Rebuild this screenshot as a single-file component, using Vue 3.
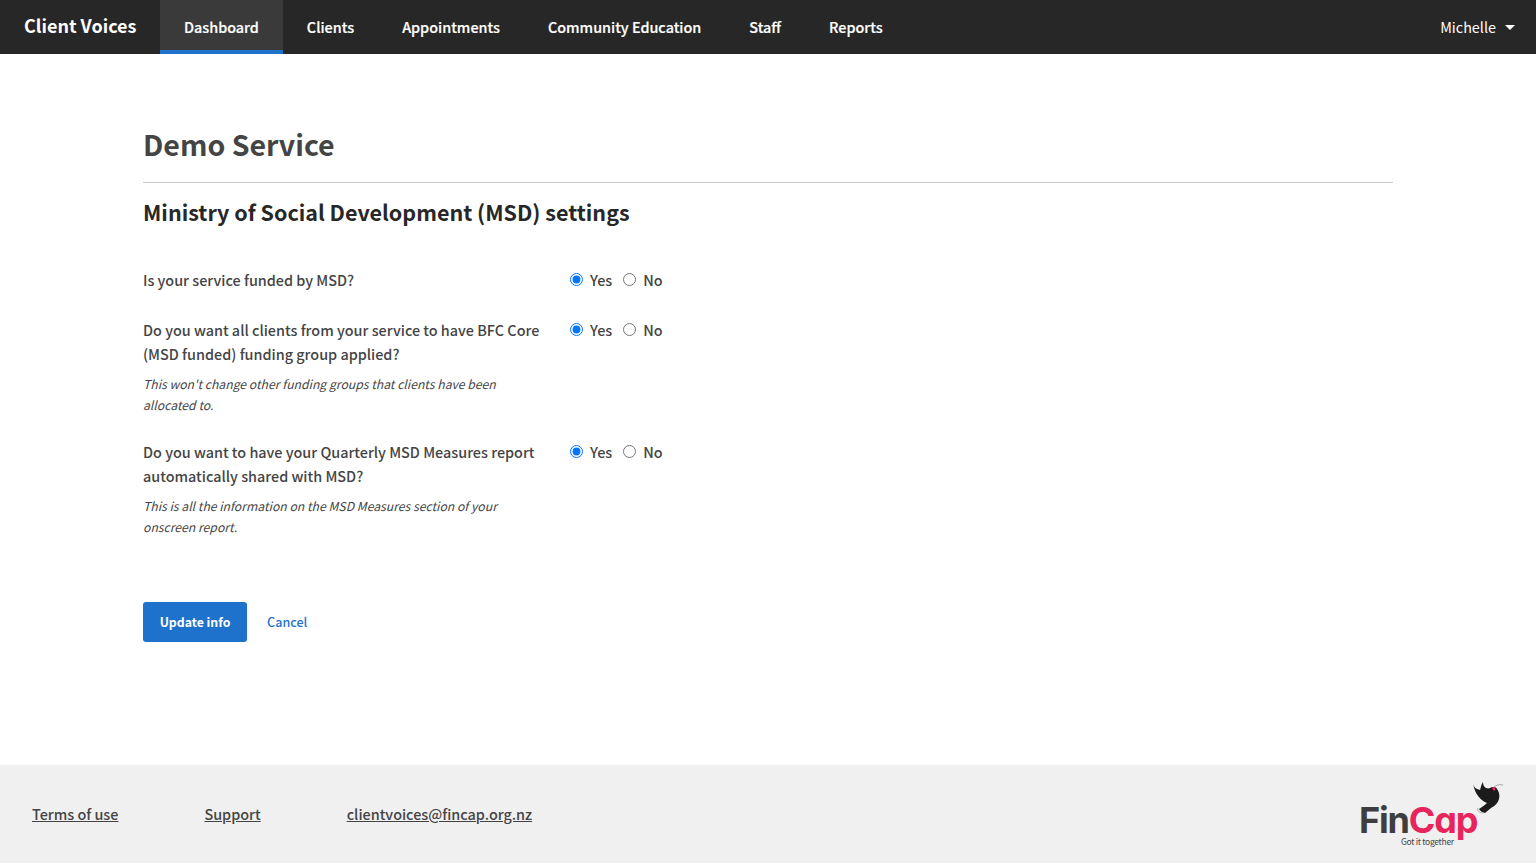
<script setup>
const links = ['Dashboard', 'Clients', 'Appointments', 'Community Education', 'Staff', 'Reports']
const questions = [
  { id: 'funded', text: 'Is your service funded by MSD?' },
  { id: 'core', text: 'Do you want all clients from your service to have BFC Core (MSD funded) funding group applied?', hint: "This won't change other funding groups that clients have been allocated to." },
  { id: 'report', text: 'Do you want to have your Quarterly MSD Measures report automatically shared with MSD?', hint: 'This is all the information on the MSD Measures section of your onscreen report.' }
]
</script>

<template>
  <div class="page">
    <nav class="nav">
      <a class="brand">Client Voices</a>
      <a v-for="(l, i) in links" :key="l" class="link" :class="{ active: i === 0 }">{{ l }}</a>
      <a class="user">Michelle<span class="caret"></span></a>
    </nav>
    <main class="main">
      <h1 class="title">Demo Service</h1>
      <h2 class="sub">Ministry of Social Development (MSD) settings</h2>
      <form class="form" @submit.prevent>
        <div v-for="q in questions" :key="q.id" class="row">
          <div class="question">
            <div class="qtext">{{ q.text }}</div>
            <p v-if="q.hint" class="hint">{{ q.hint }}</p>
          </div>
          <div class="choices">
            <label class="choice"><input type="radio" :name="q.id" checked><span>Yes</span></label>
            <label class="choice"><input type="radio" :name="q.id"><span>No</span></label>
          </div>
        </div>
        <div class="actions">
          <button class="btn" type="submit">Update info</button>
          <a class="cancel">Cancel</a>
        </div>
      </form>
    </main>
    <footer class="footer">
      <a class="flink">Terms of use</a>
      <a class="flink">Support</a>
      <a class="flink">clientvoices@fincap.org.nz</a>
      <div class="logo">
        <svg class="bird" viewBox="0 0 36 40" width="36" height="40">
          <path d="M4 3 C5 7 8 8 11 9 C12 6 12 4 14 1 C14 4 15 6 17 7 C20 8 21 7 23 6 L27 6.5 C30 10 31 14 30 18 C29 22 26 25 22 27 L16 32 C13 31 11 30 10 28 C13 26 16 24 18 22 C12 20 6 13 4 3 Z" fill="#1b1b1b"/>
          <path d="M23 6.5 L26 6 L26 9.5 L24 9.5 Z" fill="#e8245c"/>
          <path d="M25 6 C27 4 31 3 34 4" fill="none" stroke="#777" stroke-width=".6"/>
          <path d="M9 27 C8 29 10 32 14 32" fill="none" stroke="#777" stroke-width=".6"/>
        </svg>
        <div class="word"><span class="fin">Fin</span><span class="cap">Cap</span></div>
        <div class="tag">Got it together</div>
      </div>
    </footer>
  </div>
</template>

<style>
html, body { margin: 0; padding: 0; }
</style>

<style scoped>
.page {
  min-height: 863px;
  display: flex;
  flex-direction: column;
  font-family: "Noto Sans CJK SC", "Noto Sans", sans-serif;
  color: #444;
  background: #fff;
}
.nav {
  height: 54px;
  background: #272727;
  display: flex;
  align-items: stretch;
  color: #fff;
}
.brand {
  width: 160px;
  box-sizing: border-box;
  padding-left: 24px;
  font-size: 18px;
  font-weight: 700;
  line-height: 51px;
}
.link {
  padding: 0 24px;
  font-size: 14.38px;
  font-weight: 500;
  -webkit-text-stroke: .2px #fff;
  line-height: 54px;
  box-sizing: border-box;
}
.link.active {
  background: #3a3a3a;
  border-bottom: 4px solid #1f72cc;
}
.user {
  margin-left: auto;
  padding-right: 21px;
  font-size: 14.4px;
  line-height: 56px;
  display: flex;
  align-items: center;
}
.caret {
  margin-left: 9px;
  border-top: 5px solid #fff;
  border-left: 5px solid transparent;
  border-right: 5px solid transparent;
}
.main {
  flex: 1;
  padding: 0 143px;
}
.title {
  margin: 0;
  padding: 70px 0 18px;
  height: 40px;
  font-size: 28.5px;
  line-height: 40px;
  font-weight: 700;
  color: #444;
  border-bottom: 1px solid #c8c8c8;
}
.sub {
  margin: 13px 0 0;
  font-size: 21.5px;
  line-height: 32px;
  font-weight: 700;
  color: #272727;
}
.form { margin-top: 40px; }
.row {
  display: flex;
  margin-bottom: 24px;
}
.question { width: 427px; padding-right: 27px; box-sizing: border-box; }
.qtext {
  font-size: 14.4px;
  line-height: 24px;
  font-weight: 500;
  padding-bottom: 2px;
}
.hint {
  margin: 6px 0 0;
  font-size: 12.2px;
  line-height: 21px;
  font-style: italic;
  width: 370px;
}
.choices { display: flex; gap: 11px; height: 24px; }
.choice {
  display: flex;
  align-items: center;
  font-size: 14.4px;
  font-weight: 500;
  line-height: 24px;
}
.choice input {
  margin: 0 7px 0 0;
  width: 13px;
  height: 13px;
  position: relative;
  top: -1px;
}
.actions {
  display: flex;
  align-items: center;
  gap: 20px;
  margin-top: 64px;
}
.btn {
  width: 104px;
  height: 40px;
  border: 0;
  border-radius: 3px;
  background: #1f72cc;
  color: #fff;
  font: 700 12.3px "Noto Sans CJK SC", sans-serif;
}
.cancel {
  color: #1f72cc;
  font-size: 12.6px;
  font-weight: 500;
  padding-bottom: 2px;
}
.footer {
  height: 98px;
  box-sizing: border-box;
  padding-bottom: 2px;
  background: #f0f0f0;
  display: flex;
  align-items: center;
  padding-left: 32px;
  gap: 86px;
  position: relative;
}
.flink {
  font-size: 14.4px;
  font-weight: 500;
  text-decoration: underline;
  color: #444;
}
.logo { position: absolute; left: 1359px; top: 16px; width: 145px; height: 70px; }
.bird { position: absolute; left: 110px; top: 0; }
.word {
  position: absolute;
  left: 0;
  top: 22px;
  font-family: "Inter", sans-serif;
  font-feature-settings: "cv11";
  font-size: 36px;
  font-weight: 700;
  letter-spacing: -1.2px;
  line-height: 34px;
}
.fin { color: #3e3e3e; }
.cap { color: #e8245c; }
.tag {
  position: absolute;
  left: 42px;
  top: 55px;
  font-size: 8.5px;
  letter-spacing: -.3px;
  line-height: 10px;
  color: #444;
  white-space: nowrap;
}
</style>
